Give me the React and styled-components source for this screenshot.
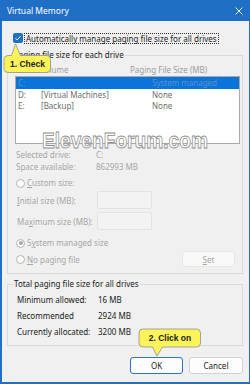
import React from 'react';
import styled, { createGlobalStyle } from 'styled-components';

const Global = createGlobalStyle`
  html, body { margin: 0; padding: 0; background: #ffffff; }
  body { font-family: "Noto Sans", "Open Sans", sans-serif; }
  * { box-sizing: border-box; }
`;

const Window = styled.div`
  position: relative;
  width: 250px;
  height: 384px;
  background: #1f6fc6;
  padding: 0 1px 2px 2px;
  display: flex;
  flex-direction: column;
  overflow: hidden;
`;

const TitleBar = styled.div`
  height: 21px;
  flex: none;
  display: flex;
  align-items: center;
  justify-content: space-between;
  padding: 0 6px 0 5px;
  color: #ffffff;
  font-size: 8.5px;
`;

const Body = styled.div`
  flex: 1;
  background: #f0f0f0;
  padding: 0 6px 0 5px;
  display: flex;
  flex-direction: column;
  font-size: 8px;
  color: #1a1a1a;
`;

const CheckRow = styled.div`
  margin-top: 11px;
  height: 12px;
  display: flex;
  align-items: center;
  padding-left: 6px;
`;

const CheckBox = styled.span`
  width: 10px;
  height: 10px;
  border-radius: 2px;
  background: #1f6fc6;
  display: flex;
  align-items: center;
  justify-content: center;
  flex: none;
`;

const FocusLabel = styled.span`
  margin-left: 1px;
  padding: 0 1px;
  height: 11px;
  line-height: 10px;
  border: 1px dotted #333;
  white-space: nowrap;
`;

const Group = styled.fieldset`
  margin: ${p => p.$top}px 0 0 0;
  border: 1px solid #dadada;
  padding: 0 ${p => p.$right}px ${p => p.$bottom}px 7px;
  min-width: 0;
`;

const Legend = styled.legend`
  font-size: 8px;
  line-height: 10px;
  padding: 0 1px;
  margin-left: -2px;
  color: #1a1a1a;
`;

const Header = styled.div`
  margin-top: 2px;
  height: 14px;
  display: flex;
  align-items: center;
  color: #9c9c9c;
  white-space: nowrap;
`;

const HeadCell = styled.span`
  width: ${p => p.$w}px;
  padding-left: ${p => p.$pl || 0}px;
  flex: none;
`;

const List = styled.div`
  height: 68px;
  border: 1px solid #a9a9a9;
  background: #ffffff;
  display: flex;
  flex-direction: column;
`;

const Row = styled.div`
  height: 11.5px;
  display: flex;
  align-items: center;
  background: ${p => (p.$sel ? '#0a74da' : 'transparent')};
  color: ${p => (p.$sel ? '#5e8fca' : '#6d6d6d')};
  white-space: nowrap;
`;

const Cell = styled.span`
  width: ${p => p.$w}px;
  padding-left: ${p => p.$pl || 0}px;
  flex: none;
`;

const InfoRow = styled.div`
  height: ${p => p.$h || 12}px;
  margin-top: ${p => p.$mt || 0}px;
  display: flex;
  align-items: center;
  padding-left: ${p => p.$pl || 1}px;
  color: ${p => p.$color || '#a6a6a6'};
  white-space: nowrap;
  line-height: 10px;
`;

const Label = styled.span`
  width: ${p => p.$w || 80}px;
  flex: none;
`;

const Radio = styled.span`
  width: 9px;
  height: 9px;
  border-radius: 50%;
  border: 1px solid #b4b4b4;
  background: #ffffff;
  flex: none;
  margin-right: 2px;
  display: flex;
  align-items: center;
  justify-content: center;
  &::after {
    content: '';
    display: ${p => (p.$on ? 'block' : 'none')};
    width: 4px;
    height: 4px;
    border-radius: 50%;
    background: #a8a8a8;
  }
`;

const SizeRow = styled.div`
  height: 18px;
  margin-top: ${p => p.$mt || 0}px;
  display: flex;
  align-items: center;
  padding-left: 2px;
  color: #a6a6a6;
  white-space: nowrap;
`;

const TextBox = styled.span`
  width: 55px;
  height: 18px;
  border: 1px solid #e3e3e3;
  border-radius: 2px;
  background: #f3f3f3;
  flex: none;
`;

const BottomRow = styled.div`
  height: 16px;
  margin-top: 2px;
  display: flex;
  align-items: center;
  justify-content: space-between;
  padding-left: 1px;
  padding-right: 5px;
  color: #a6a6a6;
  white-space: nowrap;
`;

const Inline = styled.span`
  display: flex;
  align-items: center;
`;

const SetButton = styled.span`
  width: 53px;
  height: 16px;
  border: 1px solid #e6e6e6;
  border-radius: 3px;
  background: #f9f9f9;
  display: flex;
  align-items: center;
  justify-content: center;
  color: #a6a6a6;
`;

const Buttons = styled.div`
  margin-top: 11px;
  display: flex;
  justify-content: flex-end;
  gap: 6px;
`;

const Button = styled.span`
  width: ${p => p.$w}px;
  height: 17px;
  border: 1px solid ${p => (p.$primary ? '#2b74c9' : '#d3d3d3')};
  border-radius: 3px;
  background: #fdfdfd;
  display: flex;
  align-items: center;
  justify-content: center;
  color: #1a1a1a;
`;

const U = styled.span`
  text-decoration: underline;
`;

const Watermark = styled.div`
  position: absolute;
  left: 42px;
  top: 133px;
  height: 16px;
  font-family: "Liberation Sans", Arial, sans-serif;
  font-weight: bold;
  font-size: 22px;
  line-height: 16px;
  color: #ffffff;
  -webkit-text-stroke: 0.8px #8c8c8c;
  white-space: nowrap;
  transform: scaleX(0.87);
  transform-origin: left center;
  pointer-events: none;
`;

const Callout = styled.div`
  position: absolute;
  left: ${p => p.$x}px;
  top: ${p => p.$y}px;
  width: ${p => p.$w}px;
  height: ${p => p.$h}px;
`;

const CalloutShape = styled.svg`
  position: absolute;
  left: 0;
  top: 0;
`;

const CalloutText = styled.span`
  position: absolute;
  left: 0;
  right: 0;
  top: ${p => p.$ty}px;
  height: 17px;
  display: flex;
  align-items: center;
  justify-content: center;
  font-family: "Liberation Sans", Arial, sans-serif;
  font-weight: bold;
  font-size: 8.5px;
  color: #222222;
  white-space: nowrap;
`;

export default function App() {
  return (
    <>
      <Global />
      <Window>
        <TitleBar>
          <span>Virtual Memory</span>
          <svg width="8" height="8" viewBox="0 0 8 8">
            <path d="M0.5 0.5 L7.5 7.5 M7.5 0.5 L0.5 7.5" stroke="#ffffff" strokeWidth="0.9" fill="none" />
          </svg>
        </TitleBar>
        <Body>
          <CheckRow>
            <CheckBox>
              <svg width="8" height="8" viewBox="0 0 8 8">
                <path d="M1.5 4.2 L3.2 5.9 L6.6 2.2" stroke="#ffffff" strokeWidth="1" fill="none" />
              </svg>
            </CheckBox>
            <FocusLabel>Automatically manage paging file size for all drives</FocusLabel>
          </CheckRow>

          <Group $top={6} $right={2} $bottom={6}>
            <Legend>Paging file size for each drive</Legend>
            <Header>
              <HeadCell $w={25} $pl={2}>Drive</HeadCell>
              <HeadCell $w={90}>Volume</HeadCell>
              <HeadCell $w={90}>Paging File Size (MB)</HeadCell>
            </Header>
            <List>
              <Row $sel>
                <Cell $w={25} $pl={2}>C:</Cell>
                <Cell $w={111}></Cell>
                <Cell $w={80}>System managed</Cell>
              </Row>
              <Row>
                <Cell $w={25} $pl={2}>D:</Cell>
                <Cell $w={111}>[Virtual Machines]</Cell>
                <Cell $w={80}>None</Cell>
              </Row>
              <Row>
                <Cell $w={25} $pl={2}>E:</Cell>
                <Cell $w={111}>[Backup]</Cell>
                <Cell $w={80}>None</Cell>
              </Row>
            </List>

            <InfoRow $mt={5}>
              <Label>Selected drive:</Label>
              <span>C:</span>
            </InfoRow>
            <InfoRow>
              <Label>Space available:</Label>
              <span>862993 MB</span>
            </InfoRow>

            <InfoRow $mt={4}>
              <Radio />
              <span><U>C</U>ustom size:</span>
            </InfoRow>
            <SizeRow $mt={2}>
              <Label $w={80}><U>I</U>nitial size (MB):</Label>
              <TextBox />
            </SizeRow>
            <SizeRow $mt={3}>
              <Label $w={80}>Ma<U>x</U>imum size (MB):</Label>
              <TextBox />
            </SizeRow>
            <InfoRow $mt={7}>
              <Radio $on />
              <span>S<U>y</U>stem managed size</span>
            </InfoRow>
            <BottomRow>
              <Inline>
                <Radio />
                <span><U>N</U>o paging file</span>
              </Inline>
              <SetButton><U>S</U>et</SetButton>
            </BottomRow>
          </Group>

          <Group $top={5} $right={2} $bottom={5}>
            <Legend>Total paging file size for all drives</Legend>
            <InfoRow $h={3} />
            <InfoRow $h={16} $pl={2} $color="#1a1a1a">
              <Label $w={81}>Minimum allowed:</Label>
              <span>16 MB</span>
            </InfoRow>
            <InfoRow $h={16} $pl={2} $color="#1a1a1a">
              <Label $w={81}>Recommended</Label>
              <span>2924 MB</span>
            </InfoRow>
            <InfoRow $h={16} $pl={2} $color="#1a1a1a">
              <Label $w={81}>Currently allocated:</Label>
              <span>3200 MB</span>
            </InfoRow>
          </Group>

          <Buttons>
            <Button $w={53} $primary>OK</Button>
            <Button $w={54}>Cancel</Button>
          </Buttons>
        </Body>

        <Watermark>ElevenForum.com</Watermark>

        <Callout $x={3} $y={43} $w={49} $h={31}>
          <CalloutShape width="49" height="31" viewBox="0 0 49 31">
            <path
              d="M5 12.5 L8.5 12.5 L12.5 1 L17.5 12.5 L43.5 12.5 Q47.5 12.5 47.5 16.5 L47.5 25.5 Q47.5 29.5 43.5 29.5 L5 29.5 Q1 29.5 1 25.5 L1 16.5 Q1 12.5 5 12.5 Z"
              fill="#fbf35a"
              stroke="#8f8f8f"
              strokeWidth="0.8"
            />
          </CalloutShape>
          <CalloutText $ty={12.5}>1. Check</CalloutText>
        </Callout>

        <Callout $x={138} $y={328} $w={64} $h={30}>
          <CalloutShape width="64" height="30" viewBox="0 0 64 30">
            <path
              d="M5 1 L58.5 1 Q62.5 1 62.5 5 L62.5 15 Q62.5 19 58.5 19 L24.5 19 L19 28 L14.5 19 L5 19 Q1 19 1 15 L1 5 Q1 1 5 1 Z"
              fill="#fbf35a"
              stroke="#8f8f8f"
              strokeWidth="0.8"
            />
          </CalloutShape>
          <CalloutText $ty={1.5}>2. Click on</CalloutText>
        </Callout>
      </Window>
    </>
  );
}
